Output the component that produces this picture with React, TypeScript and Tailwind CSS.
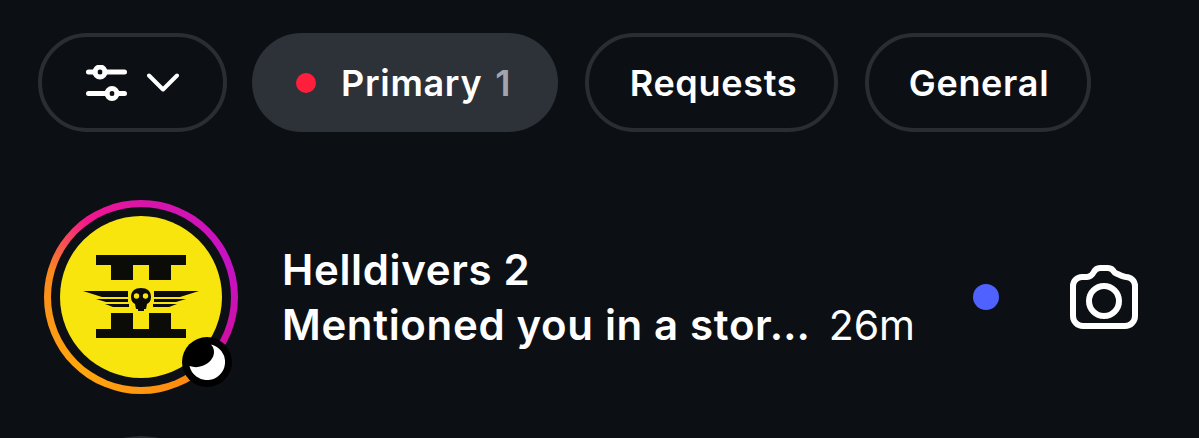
import React from 'react';

const font = { fontFamily: 'Inter, "Noto Sans", sans-serif' };

const SlidersIcon = () => (
  <svg width="41" height="36" viewBox="0 0 41 36" fill="none" stroke="#fff" strokeWidth="5" strokeLinecap="round">
    <path d="M2.500 7H9M19 7h19.500M2.500 28.500H21M31 28.500h7.500" />
    <circle cx="14" cy="7" r="5" />
    <circle cx="26" cy="28.500" r="5" />
  </svg>
);

const Chevron = () => (
  <svg width="32" height="19" viewBox="0 0 32 19" fill="none" stroke="#fff" strokeWidth="4" strokeLinecap="round" strokeLinejoin="round">
    <path d="M2 2.500l14 14 14-14" />
  </svg>
);

const CameraIcon = () => (
  <svg width="68" height="64" viewBox="0 0 68 64" fill="none" stroke="#fff" strokeWidth="6" strokeLinejoin="round">
    <path d="M3 21a9 9 0 0 1 9-9h5c3 0 5-1.500 6.500-4.500 1.500-3 3-4.500 6.500-4.500h8c3.500 0 5 1.500 6.500 4.500C51 10.500 53 12 56 12a9 9 0 0 1 9 9v30a10 10 0 0 1-10 10H13A10 10 0 0 1 3 51z" />
    <circle cx="34" cy="36" r="15" />
  </svg>
);

const HelldiversLogo = () => (
  <svg width="162" height="162" viewBox="0 0 162 162" fill="#0b0b08">
    {/* top bar and stems */}
    <path d="M36 39h90v10h-15v15H89V49H73v15H51V49H36z" />
    {/* bottom bar and stems */}
    <path d="M51 97h22v16h16V97h22v16h15v9H36v-9h15z" />
    {/* wings */}
    <path d="M23 75h45v6H42zM36 83h32v3H46zM45 88h24v3H53zM139 75H94v6h26zM126 83H94v3h22zM117 88H93v3h16z" />
    {/* skull */}
    <path d="M71 81c0-6 4-9 10-9s10 3 10 9c0 4-2 6-4 7l-1 5h-2v2h-6v-2h-2l-1-5c-2-1-4-3-4-7z" />
    <circle cx="76.500" cy="80" r="2.700" fill="#f9e50e" />
    <circle cx="85.500" cy="80" r="2.700" fill="#f9e50e" />
  </svg>
);

const Pill = ({ width, offset, children }: { width: string; offset: string; children: React.ReactNode }) => (
  <div className={`flex h-[99px] items-center justify-center rounded-full border-[4px] border-[#2a2e33] text-[36px] font-semibold tracking-[0.7px] text-white ${width} ${offset}`}>
    {children}
  </div>
);

export default function App() {
  return (
    <div className="h-[438px] w-[1199px] overflow-hidden bg-[#0c1014]" style={font}>
      <div className="flex items-center pl-[38px] pt-[33px]">
        <div className="flex h-[99px] w-[189px] items-center justify-center gap-[20px] rounded-full border-[4px] border-[#2a2e33]">
          <SlidersIcon />
          <Chevron />
        </div>
        <div className="ml-[25px] flex h-[99px] w-[306px] items-center rounded-full bg-[#2d3138] pl-[44px] text-[36px] font-semibold tracking-[0.7px] text-white">
          <span className="h-[20px] w-[20px] rounded-full bg-[#ff1f3d]" />
          <span className="ml-[25px]">Primary</span>
          <span className="ml-[13px] text-[#a2a5ae]">1</span>
        </div>
        <div className="ml-[27px]">
          <Pill width="w-[253px]" offset="pl-[4px]">Requests</Pill>
        </div>
        <div className="ml-[27px]">
          <Pill width="w-[226px]" offset="pl-[2px]">General</Pill>
        </div>
      </div>

      <div className="mt-[68px] flex items-center pl-[44px]">
        <div className="relative h-[194px] w-[194px] shrink-0">
          <div className="h-full w-full rounded-full bg-[conic-gradient(from_0deg,#d915a8_0deg,#c512c4_70deg,#d010a0_120deg,#ff8a10_150deg,#ffa70f_220deg,#fb8a1c_285deg,#f5168c_325deg,#d915a8_360deg)] p-[7px]">
            <div className="flex h-full w-full items-center justify-center rounded-full bg-[#0c1014]">
              <div className="h-[162px] w-[162px] overflow-hidden rounded-full bg-[#f9e50e]">
                <HelldiversLogo />
              </div>
            </div>
          </div>
          <div className="absolute bottom-[7px] right-[6px] flex h-[50px] w-[50px] items-center justify-center rounded-full bg-black">
            <svg width="36" height="36" viewBox="0 0 36 36" fill="#fff">
              <path d="M22 .5A18 18 0 1 1 .5 22C5 23.500 9 23.500 13 22 20 20 25 14 25 8c0-3-1-5-3-7.500z" />
            </svg>
          </div>
        </div>

        <div className="ml-[44px] w-[633px] shrink-0 whitespace-nowrap text-[42px] leading-[55px] text-white">
          <div className="font-semibold tracking-[0.65px]">Helldivers 2</div>
          <div className="flex items-baseline">
            <span className="font-semibold tracking-[0.65px]">Mentioned you in a stor…</span>
            <span className="ml-[18px] text-[41px]">26m</span>
          </div>
        </div>

        <span className="ml-[58px] h-[26px] w-[26px] shrink-0 rounded-full bg-[#4f62ff]" />
        <div className="ml-[71px] shrink-0">
          <CameraIcon />
        </div>
      </div>

      {/* top edge of the next row's avatar */}
      <div className="ml-[60px] mt-[42px] h-[162px] w-[162px] rounded-full bg-[#2a2e33]" />
    </div>
  );
}
